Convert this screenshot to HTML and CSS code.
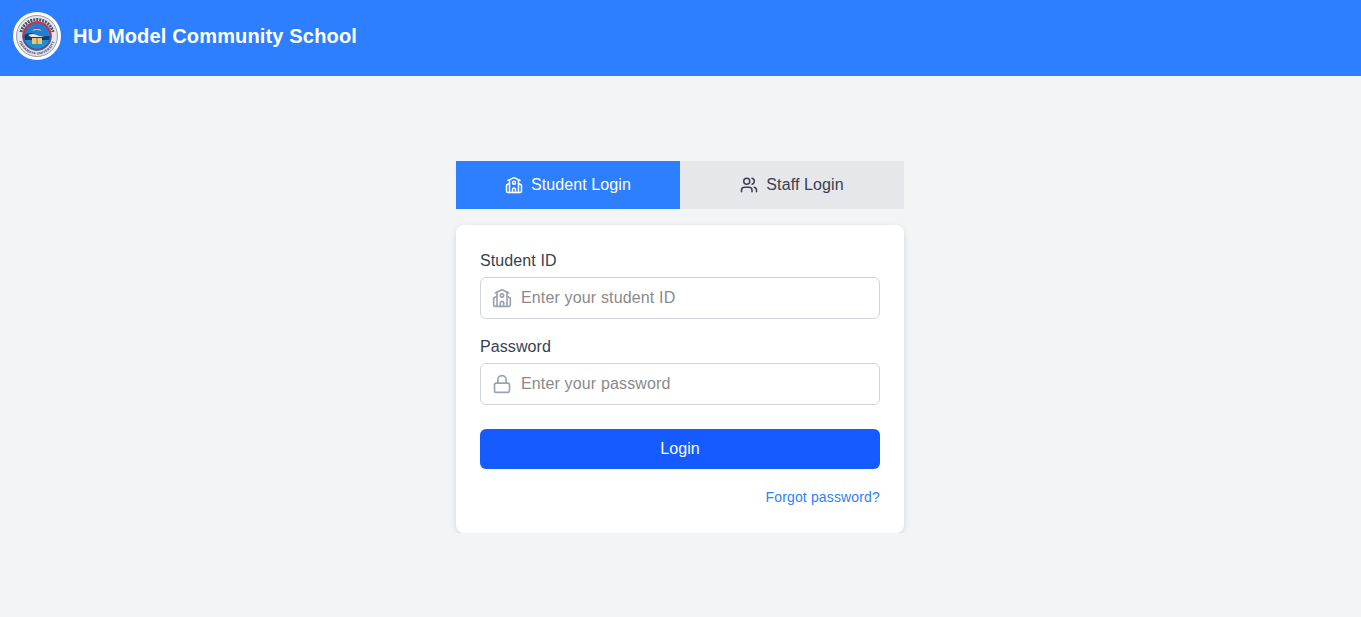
FILE: index.html
```html
<!DOCTYPE html>
<html lang="en">
<head>
<meta charset="UTF-8">
<meta name="viewport" content="width=device-width, initial-scale=1.0">
<title>HU Model Community School</title>
<link rel="stylesheet" href="styles.css">
</head>
<body>

<header class="topbar">
    <svg class="logo" viewBox="0 0 48 48" aria-hidden="true">
        <defs>
            <path id="sealBottom" d="M5.5 24 A18.5 18.5 0 0 0 42.5 24"/>
            <clipPath id="sealInner"><circle cx="24" cy="24" r="12.5"/></clipPath>
        </defs>
        <circle cx="24" cy="24" r="24" fill="#fff"/>
        <circle cx="24" cy="24" r="20.5" fill="#e4e6ee" stroke="#7f8596" stroke-width="0.8"/>
        <path d="M8 20 A16.5 16.5 0 0 1 40 20" fill="none" stroke="#4a4f63" stroke-width="3" stroke-dasharray="2 1"/>
        <text class="seal-text"><textPath href="#sealBottom" startOffset="50%" text-anchor="middle">HARAMAYA UNIVERSITY</textPath></text>
        <circle cx="24" cy="24" r="14.5" fill="#b9405a" stroke="#5c6178" stroke-width="0.8"/>
        <path d="M10.5 24 A13.5 13.5 0 0 1 37.5 24" fill="none" stroke="#d8293f" stroke-width="1.6"/>
        <path d="M10.5 24 A13.5 13.5 0 0 0 37.5 24" fill="none" stroke="#2f5fb0" stroke-width="1.6"/>
        <g clip-path="url(#sealInner)">
            <rect x="10" y="11" width="28" height="27" fill="#1f7fd6"/>
            <path d="M19 19 Q24 13 29 19 Q24 17 19 19 Z" fill="#e8cf3f"/>
            <path d="M21 15 H27 V17 H21 Z" fill="#7a4fa8"/>
            <path d="M10 24 Q16 19 22 22 T38 24 V28 H10 Z" fill="#123a6b"/>
            <path d="M15 23 Q20 21 24 23 T33 24 L28 25 H18 Z" fill="#dfe9f1"/>
            <path d="M10 28 H38 V38 H10 Z" fill="#1f8fd0"/>
            <path d="M19 26 H29 V32 H19 Z" fill="#e8c877"/>
            <path d="M24 26 V32" stroke="#8a5a22" stroke-width="0.8"/>
        </g>
    </svg>
    <span class="school-name">HU Model Community School</span>
</header>

<main class="page">
    <div class="login-box">
        <div class="tabs">
            <button type="button" class="tab tab-active">
                <svg class="icon tab-icon" viewBox="0 0 24 24">
                    <path d="M14 22v-4a2 2 0 1 0-4 0v4"/>
                    <path d="m18 10 3.447 1.724a1 1 0 0 1 .553.894V20a2 2 0 0 1-2 2H4a2 2 0 0 1-2-2v-7.382a1 1 0 0 1 .553-.894L6 10"/>
                    <path d="M18 5v17"/>
                    <path d="m4 6 7.106-3.553a2 2 0 0 1 1.788 0L20 6"/>
                    <path d="M6 5v17"/>
                    <circle cx="12" cy="9" r="2"/>
                </svg>
                Student Login
            </button>
            <button type="button" class="tab">
                <svg class="icon tab-icon" viewBox="0 0 24 24">
                    <path d="M16 21v-2a4 4 0 0 0-4-4H6a4 4 0 0 0-4 4v2"/>
                    <circle cx="9" cy="7" r="4"/>
                    <path d="M22 21v-2a4 4 0 0 0-3-3.87"/>
                    <path d="M16 3.13a4 4 0 0 1 0 7.75"/>
                </svg>
                Staff Login
            </button>
        </div>

        <form class="card">
            <label class="field-label" for="studentId">Student ID</label>
            <div class="field">
                <svg class="icon field-icon" viewBox="0 0 24 24">
                    <path d="M14 22v-4a2 2 0 1 0-4 0v4"/>
                    <path d="m18 10 3.447 1.724a1 1 0 0 1 .553.894V20a2 2 0 0 1-2 2H4a2 2 0 0 1-2-2v-7.382a1 1 0 0 1 .553-.894L6 10"/>
                    <path d="M18 5v17"/>
                    <path d="m4 6 7.106-3.553a2 2 0 0 1 1.788 0L20 6"/>
                    <path d="M6 5v17"/>
                    <circle cx="12" cy="9" r="2"/>
                </svg>
                <input type="text" id="studentId" placeholder="Enter your student ID">
            </div>

            <label class="field-label" for="password">Password</label>
            <div class="field">
                <svg class="icon field-icon" viewBox="0 0 24 24">
                    <rect width="18" height="11" x="3" y="11" rx="2" ry="2"/>
                    <path d="M7 11V7a5 5 0 0 1 10 0v4"/>
                </svg>
                <input type="password" id="password" placeholder="Enter your password">
            </div>

            <button type="button" class="login-btn">Login</button>

            <div class="forgot-row">
                <a href="#" class="forgot-link">Forgot password?</a>
            </div>
        </form>
    </div>
</main>

</body>
</html>
```

FILE: styles.css
```css
* {
    box-sizing: border-box;
}
body {
    font-family: "Liberation Sans", Arial, sans-serif;
    margin: 0;
    padding: 0;
    background-color: #f3f4f6;
    color: #374151;
    letter-spacing: 0.1px;
}
.topbar {
    display: flex;
    align-items: center;
    gap: 12px;
    height: 76px;
    padding: 12px 13px 16px;
    background-color: #2d7fff;
}
.logo {
    width: 48px;
    height: 48px;
}
.seal-text {
    font-size: 3.6px;
    font-weight: 700;
    letter-spacing: 0.2px;
    fill: #3c4156;
}
.school-name {
    color: #fff;
    font-size: 20px;
    font-weight: 700;
    letter-spacing: 0.16px;
}
.page {
    display: flex;
    justify-content: center;
    padding: 85px 1px 0 0;
}
.login-box {
    width: 448px;
}
.tabs {
    display: flex;
    margin-bottom: 16px;
}
.tab {
    flex: 1;
    display: flex;
    align-items: center;
    justify-content: center;
    gap: 8px;
    height: 48px;
    border: none;
    background-color: #e5e7eb;
    color: #374151;
    font-family: inherit;
    font-size: 16px;
    letter-spacing: inherit;
    cursor: pointer;
}
.tab-active {
    background-color: #2d7fff;
    color: #fff;
}
.icon {
    width: 20px;
    height: 20px;
    fill: none;
    stroke: currentColor;
    stroke-width: 2;
    stroke-linecap: round;
    stroke-linejoin: round;
}
.tab-icon {
    width: 18px;
    height: 18px;
}
.card {
    height: 308px;
    padding: 24px;
    background-color: #fff;
    border-radius: 8px;
    box-shadow: 0 2px 6px rgba(0, 0, 0, 0.12);
}
.field-label {
    display: block;
    margin-bottom: 4px;
    font-size: 16px;
    line-height: 24px;
    color: #374151;
}
.field {
    display: flex;
    align-items: center;
    gap: 9px;
    height: 42px;
    margin-bottom: 16px;
    padding: 0 11px;
    border: 1px solid #d1d5db;
    border-radius: 6px;
    background-color: #fff;
}
.field-icon {
    flex-shrink: 0;
    color: #9ca3af;
}
.field input {
    flex: 1;
    min-width: 0;
    border: none;
    outline: none;
    padding: 0;
    font-family: inherit;
    font-size: 16px;
    letter-spacing: 0.15px;
    color: #374151;
}
.field input::placeholder {
    color: #8a8a8a;
}
.login-btn {
    display: block;
    width: 100%;
    height: 40px;
    margin-top: 24px;
    border: none;
    border-radius: 6px;
    background-color: #155bff;
    color: #fff;
    font-family: inherit;
    font-size: 16px;
    letter-spacing: inherit;
    cursor: pointer;
}
.forgot-row {
    margin-top: 20px;
    text-align: right;
    line-height: 16px;
}
.forgot-link {
    color: #2d7fff;
    font-size: 14px;
    letter-spacing: 0.15px;
    text-decoration: none;
}
```
